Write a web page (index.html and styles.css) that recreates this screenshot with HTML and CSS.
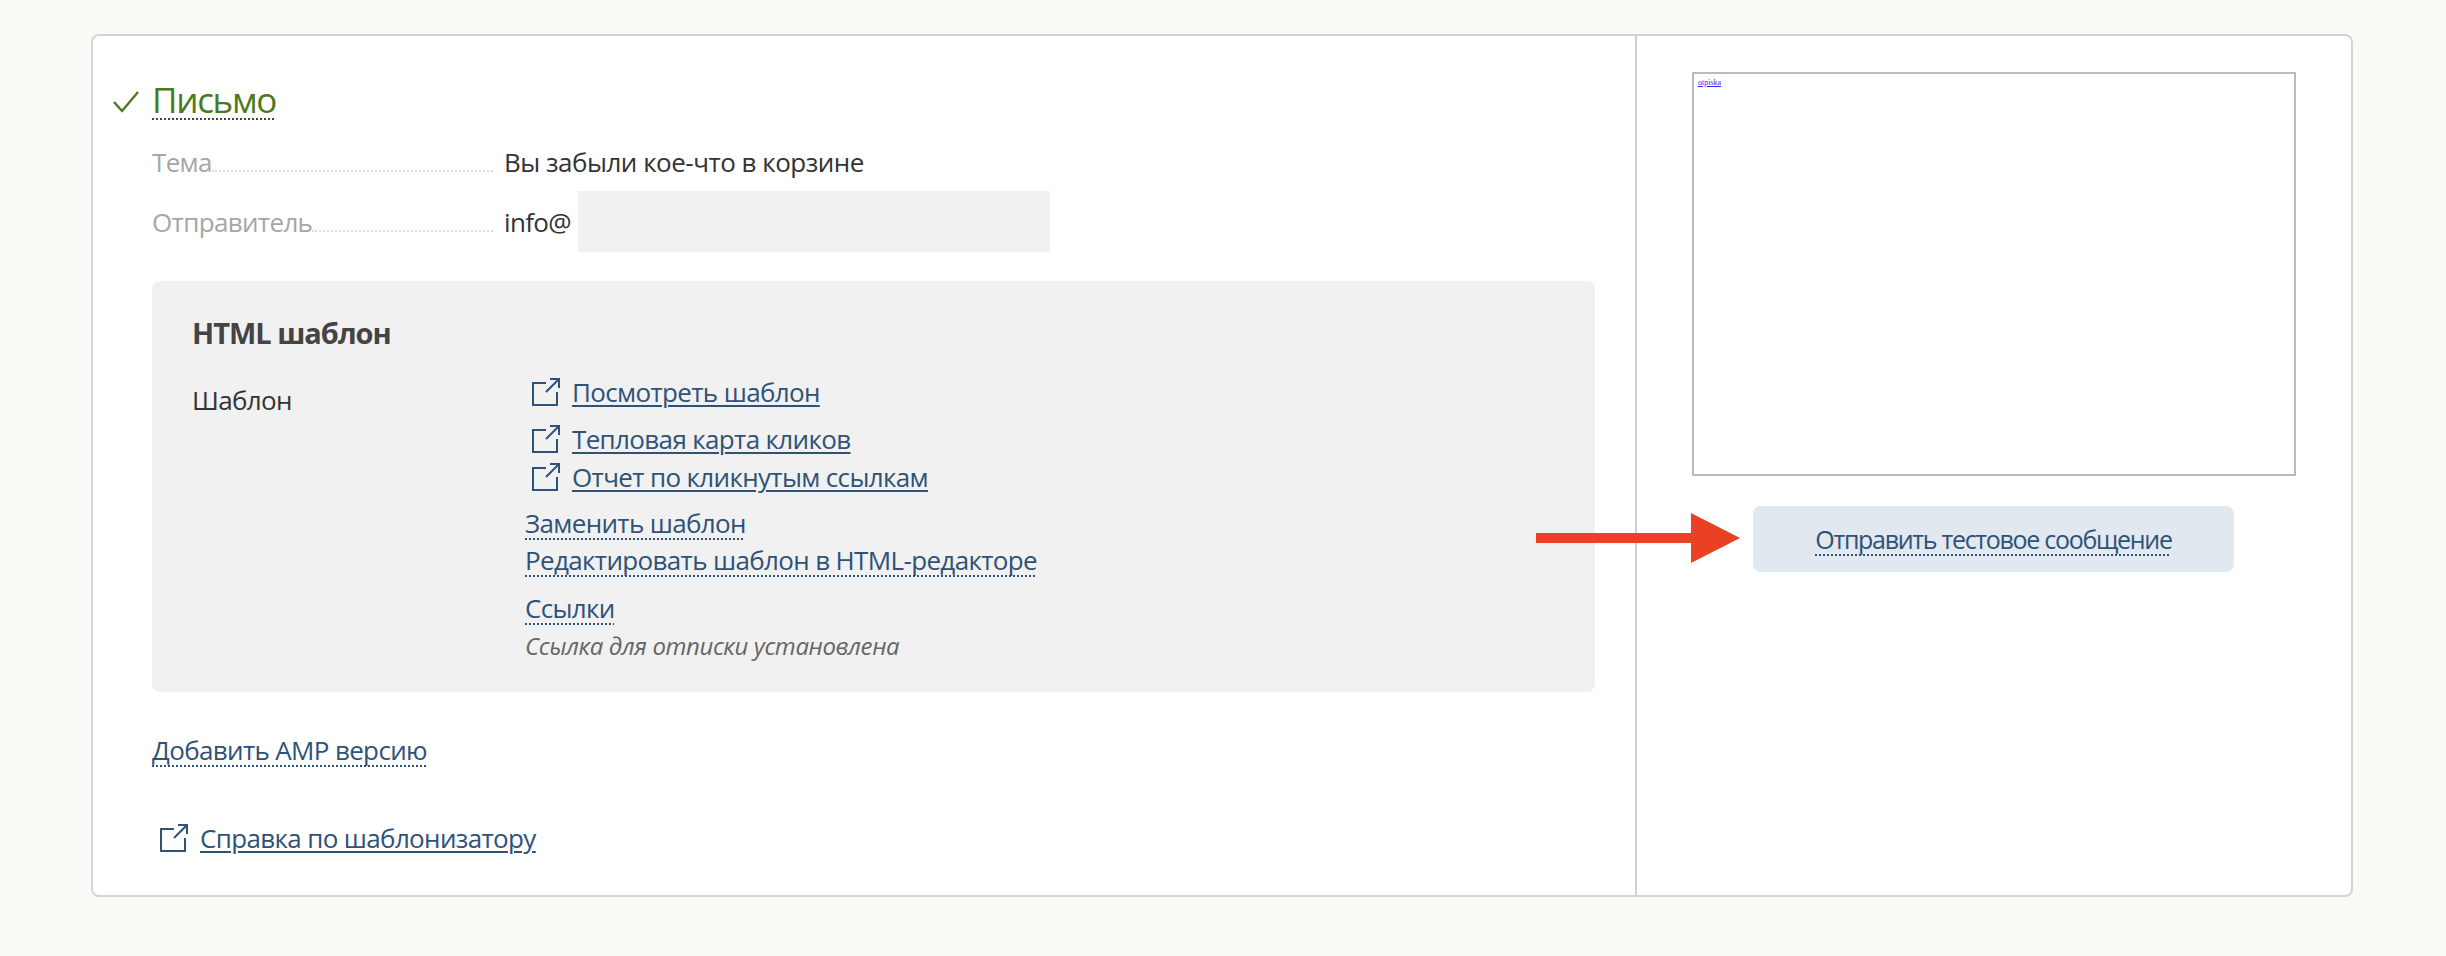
FILE: index.html
```html
<!DOCTYPE html>
<html lang="ru">

<head>
    <meta charset="UTF-8">
    <meta name="viewport" content="width=device-width, initial-scale=1.0">
    <title>Письмо</title>
    <link rel="stylesheet" href="styles.css">
</head>

<body>
    <svg class="icon-defs" width="0" height="0">
        <symbol id="ext" viewBox="0 0 28 28">
            <path d="M14 5H1v22h24V14M14 14L27 1M18 1h9v9" fill="none" stroke="currentColor" stroke-width="2" />
        </symbol>
    </svg>

    <div class="card">
        <div class="main">
            <h2 class="title">
                <svg class="check" width="26" height="22" viewBox="0 0 26 22">
                    <path d="M1 11l8 9L25 1" fill="none" stroke="currentColor" stroke-width="2.4" />
                </svg>
                <span class="dash dash-dark">Письмо</span>
            </h2>

            <div class="field field-subject">
                <div class="field-label"><span>Тема</span><i class="leader"></i></div>
                <div class="field-value">Вы забыли кое-что в корзине</div>
            </div>
            <div class="field field-sender">
                <div class="field-label"><span>Отправитель</span><i class="leader"></i></div>
                <div class="field-value">info@</div>
                <div class="redacted"></div>
            </div>

            <div class="panel">
                <h3 class="panel-title">HTML шаблон</h3>
                <div class="panel-grid">
                    <div class="panel-label">Шаблон</div>
                    <div class="panel-links">
                        <div class="ext-row ext-first">
                            <svg class="ext-icon"><use href="#ext" /></svg>
                            <a class="link" href="#">Посмотреть шаблон</a>
                        </div>
                        <div class="ext-row ext-second">
                            <svg class="ext-icon"><use href="#ext" /></svg>
                            <a class="link" href="#">Тепловая карта кликов</a>
                        </div>
                        <div class="ext-row">
                            <svg class="ext-icon"><use href="#ext" /></svg>
                            <a class="link" href="#">Отчет по кликнутым ссылкам</a>
                        </div>
                        <div class="action action-first"><a class="dash" href="#">Заменить шаблон</a></div>
                        <div class="action"><a class="dash" href="#">Редактировать шаблон в HTML-редакторе</a></div>
                        <div class="action action-last"><a class="dash" href="#">Ссылки</a></div>
                        <div class="note">Ссылка для отписки установлена</div>
                    </div>
                </div>
            </div>

            <div class="amp"><a class="dash" href="#">Добавить AMP версию</a></div>
            <div class="ext-row help">
                <svg class="ext-icon"><use href="#ext" /></svg>
                <a class="link" href="#">Справка по шаблонизатору</a>
            </div>
        </div>

        <div class="side">
            <div class="preview"><a href="#">otpiska</a></div>
            <button class="test-btn" type="button"><span class="dash">Отправить тестовое сообщение</span></button>
        </div>

        <svg class="arrow" width="205" height="50" viewBox="0 0 205 50">
            <path d="M0 20h155V0l49 25-49 25V30H0z" fill="#ea4024" />
        </svg>
    </div>
</body>

</html>
```

FILE: styles.css
```css
body {
    font-family: "Open Sans", "Noto Sans", sans-serif;
    font-size: 26px;
    letter-spacing: -0.65px;
    color: #333;
    background-color: #fafbf6;
    margin: 0;
    padding: 34px 0 0 91px;
}

a {
    color: #2f5277;
    text-decoration: none;
}

.icon-defs {
    display: block;
}

.card {
    position: relative;
    display: flex;
    width: 2262px;
    height: 863px;
    box-sizing: border-box;
    background-color: white;
    border: 2px solid #d4d4d0;
    border-radius: 8px;
}

.main {
    width: 1544px;
    box-sizing: border-box;
    border-right: 2px solid #cfcfcb;
    padding: 39px 40px 0 59px;
}

.title {
    display: flex;
    align-items: baseline;
    height: 50px;
    margin: 0 0 17px -39px;
    font-size: 35px;
    font-weight: normal;
    letter-spacing: -1.3px;
    line-height: 50px;
    color: #4b7a1e;
}

.check {
    margin-right: 13px;
}

.dash {
    color: #2f5277;
    text-decoration: underline dotted 2px;
    text-underline-offset: 5px;
    text-decoration-skip-ink: none;
}

.dash-dark {
    color: #4b7a1e;
    text-decoration-color: #444;
}

.field {
    display: flex;
    align-items: center;
    line-height: 40px;
}

.field-subject {
    margin-bottom: 9px;
}

.field-subject .field-value {
    letter-spacing: -0.5px;
}

.field-label {
    display: flex;
    align-items: baseline;
    width: 341px;
    margin-right: 11px;
    color: #a6a6a6;
}

.leader {
    flex: 1;
    border-bottom: 2px dotted #ddd;
}

.redacted {
    width: 472px;
    height: 61px;
    margin-left: 7px;
    background-color: #f1f1f1;
}

.panel {
    height: 411px;
    box-sizing: border-box;
    margin-top: 29px;
    padding: 32px 40px 0;
    background-color: #f1f1f1;
    border-radius: 8px;
}

.panel-title {
    margin: 0;
    font-size: 29px;
    letter-spacing: -1px;
    line-height: 40px;
    color: #444;
}

.panel-grid {
    display: grid;
    grid-template-columns: 333px 1fr;
    margin-top: 23px;
}

.panel-label {
    line-height: 40px;
    margin-top: 4px;
}

.ext-row {
    display: flex;
    align-items: center;
    line-height: 32px;
}

.panel-links .ext-row {
    margin-left: 7px;
}

.ext-row + .ext-row {
    margin-top: 6px;
}

.ext-row.ext-second {
    margin-top: 15px;
}

.ext-icon {
    flex: none;
    width: 28px;
    height: 28px;
    margin-right: 12px;
    color: #2f5277;
}

.link {
    text-decoration: underline;
    text-decoration-thickness: 2px;
    text-underline-offset: 3px;
}

.action {
    line-height: 37px;
}

.action-first {
    margin-top: 12px;
}

.action-last {
    margin-top: 11px;
}

.note {
    font-size: 24px;
    font-style: italic;
    letter-spacing: -0.4px;
    line-height: 37px;
    color: #666;
}

.amp {
    margin-top: 38px;
    line-height: 40px;
}

.help {
    margin: 52px 0 0 8px;
}

.side {
    flex: 1;
    display: flex;
    flex-direction: column;
    padding: 36px 55px 0;
}

.preview {
    width: 604px;
    height: 404px;
    box-sizing: border-box;
    border: 2px solid #bbb;
    padding: 2px 4px;
    font-family: "Liberation Serif", serif;
    font-size: 8px;
    line-height: 14px;
    letter-spacing: 0;
}

.preview a {
    color: #2a2aee;
    text-decoration: underline;
}

.test-btn {
    align-self: flex-start;
    width: 481px;
    height: 66px;
    margin: 30px 0 0 61px;
    padding: 0;
    font: inherit;
    font-size: 25px;
    letter-spacing: -1.3px;
    background-color: #e1e8ef;
    border: 0;
    border-radius: 8px;
}

.arrow {
    position: absolute;
    left: 1443px;
    top: 477px;
}
```
